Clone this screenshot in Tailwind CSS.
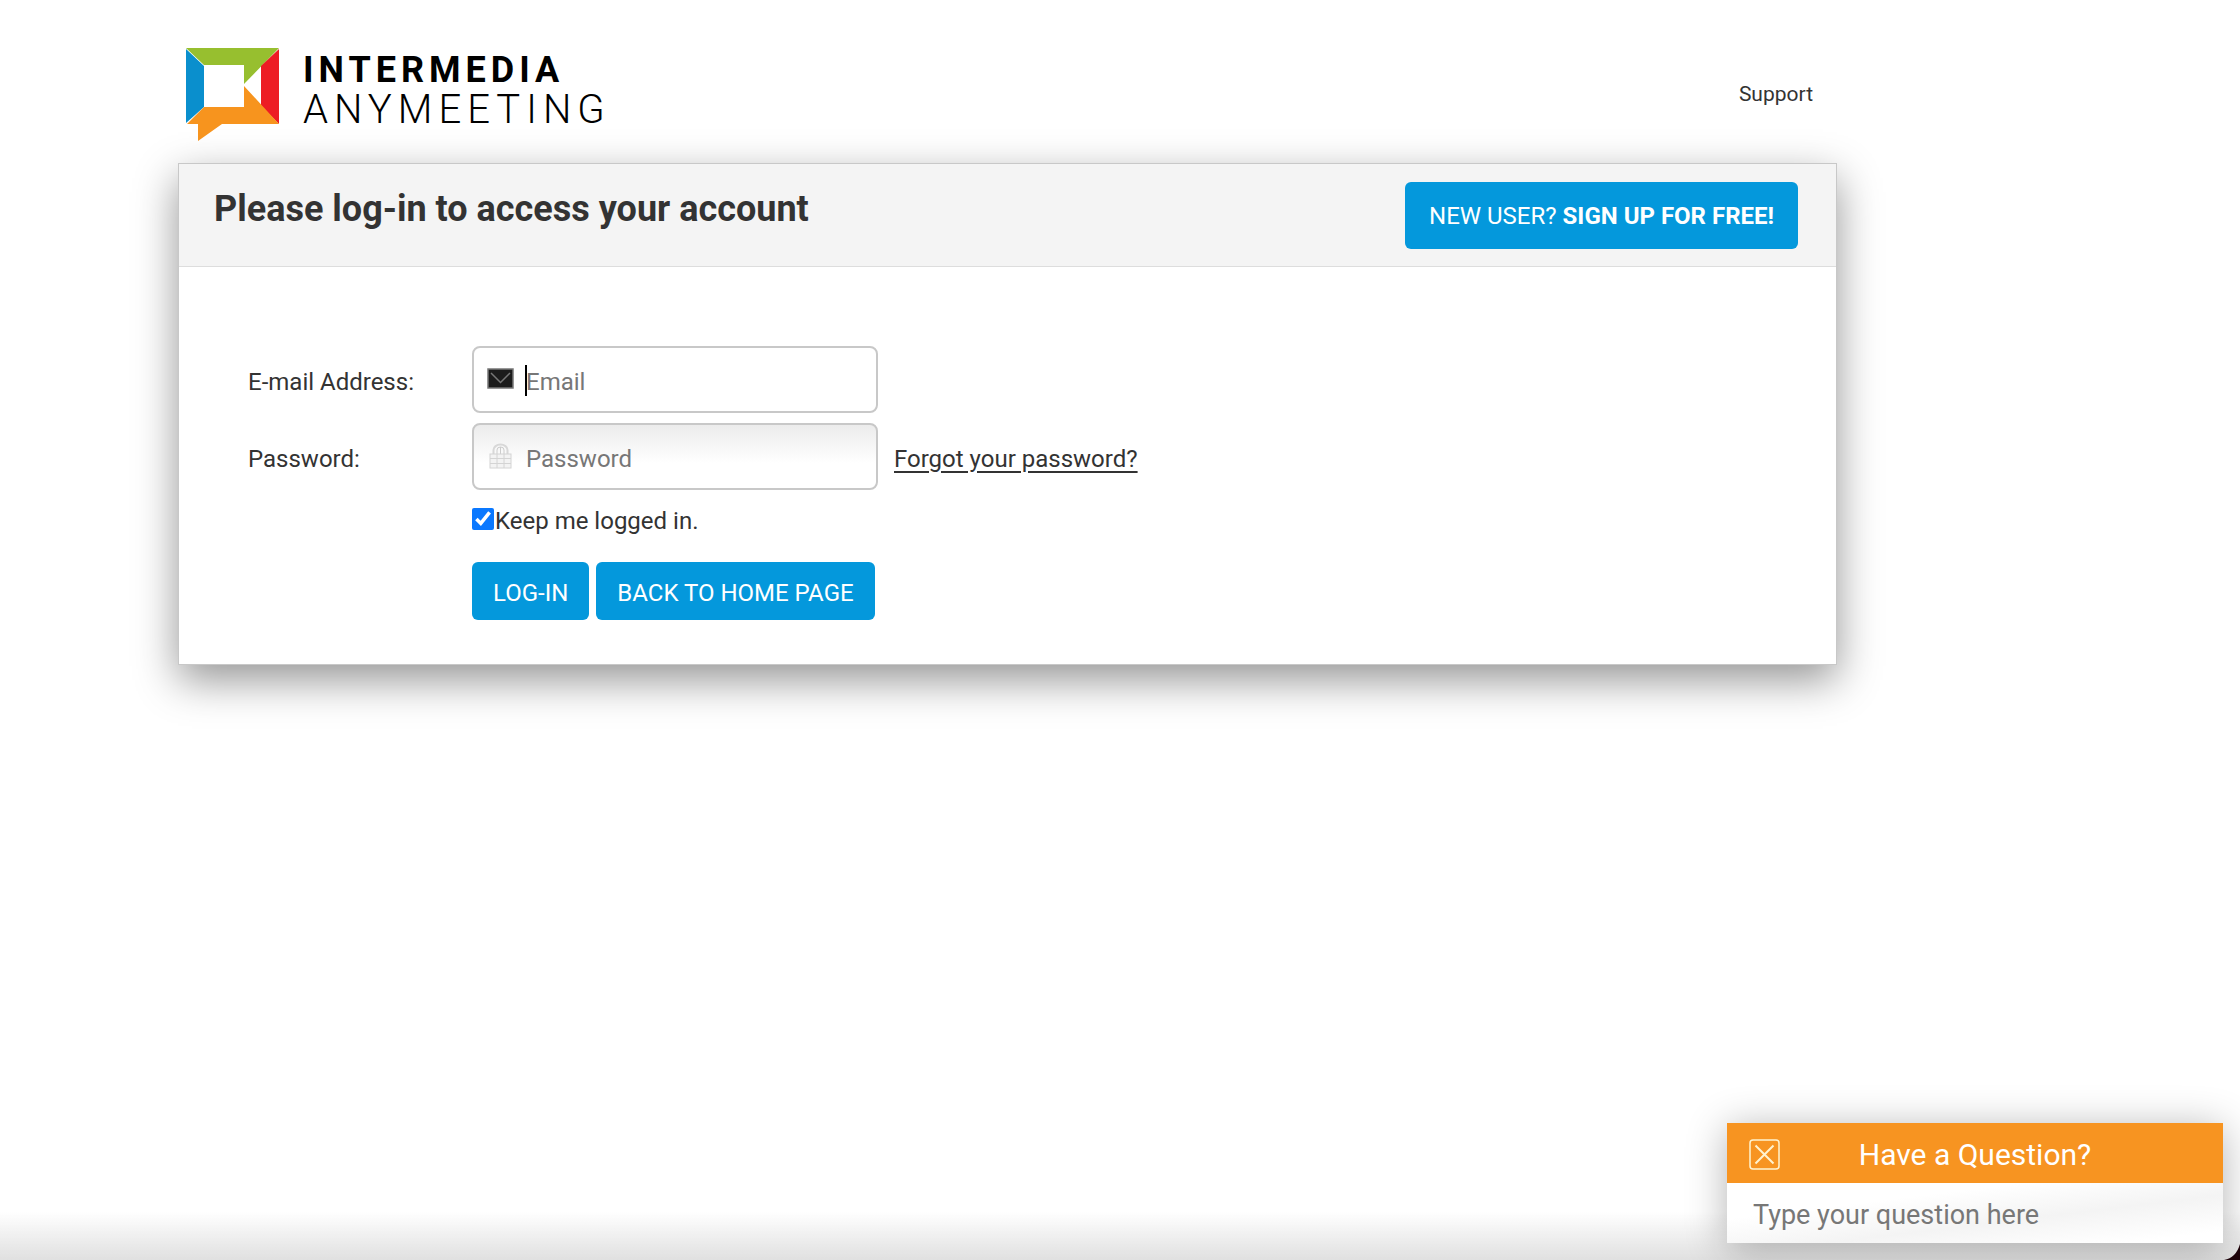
<!DOCTYPE html>
<html lang="en">
<head>
    <meta charset="UTF-8">
    <meta name="viewport" content="width=device-width, initial-scale=1.0">
    <title>Intermedia AnyMeeting - Log-in</title>
    <script src="https://cdn.jsdelivr.net/npm/@tailwindcss/browser@4"></script>
</head>
<body class="bg-white text-[#333] font-[Roboto,sans-serif] text-2xl">
    <div class="min-h-screen pl-[178px] pr-8">
        <div class="w-full max-w-[1659px]">
            <header class="flex items-start justify-between pl-2 pr-6 pt-12 h-[163px]">
                <a href="#" class="flex text-black" aria-label="Intermedia AnyMeeting">
                    <svg class="w-[93px] h-[93px]" viewBox="0 0 93 93">
                        <path fill="#97bf2f" d="M0 0H93L58 36V17H18Z"/>
                        <path fill="#0a8fcd" d="M0 1L18 18V59L0 75Z"/>
                        <path fill="#ed1c24" d="M93 1V76L75 58V18Z"/>
                        <path fill="#f7941e" d="M1 76L18 59H58V38L93 76H36L12 93V76Z"/>
                    </svg>
                    <span class="ml-6 flex flex-col">
                        <span class="text-[36px] leading-[44px] font-bold tracking-[5px]">INTERMEDIA</span>
                        <span class="text-[40px] leading-[36px] font-light tracking-[6px]">ANYMEETING</span>
                    </span>
                </a>
                <a href="#" class="mt-8 text-[21px] leading-7">Support</a>
            </header>
            <main class="border border-[#c8c8c8] bg-white shadow-[0_15px_40px_rgba(0,0,0,0.42)]">
                <div class="flex items-start justify-between bg-[#f4f4f4] border-b border-[#ddd] pl-[35px] pr-[38px] pt-[18px] h-[103px]">
                    <h1 class="pt-1 text-[36px] leading-[46px] font-bold">Please log-in to access your account</h1>
                    <a href="#" class="h-[67px] px-6 rounded-md bg-[#0498dc] text-white flex items-center whitespace-pre">NEW USER? <b>SIGN UP FOR FREE!</b></a>
                </div>
                <form class="grid grid-cols-[224px_1fr] gap-y-[10px] pl-[69px] pt-[79px] pb-[44px]">
                    <label for="email" class="self-center pt-1">E-mail Address:</label>
                    <div class="relative w-[406px]">
                        <input id="email" type="email" placeholder="Email" class="block w-full h-[67px] pl-[52px] pt-1 pr-3 border-2 border-[#c8c8c8] rounded-lg outline-none placeholder:text-[#777]">
                        <svg class="absolute left-[15px] top-[22px] w-[27px] h-[21px]" viewBox="0 0 27 21">
                            <rect x="1" y="1" width="25" height="19" fill="#1c1c1c" stroke="#777" stroke-width="1.5"/>
                            <path d="M4 5L13.500 14.500L23 5" fill="none" stroke="#777" stroke-width="1.500"/>
                        </svg>
                        <span class="absolute left-[53px] top-[19px] w-[2px] h-[31px] bg-black"></span>
                    </div>
                    <label for="password" class="self-center pt-1">Password:</label>
                    <div class="flex items-center gap-4">
                        <div class="relative w-[406px]">
                            <input id="password" type="password" placeholder="Password" class="block w-full h-[67px] pl-[52px] pt-1 pr-3 border-2 border-[#c8c8c8] rounded-lg outline-none bg-linear-to-b from-[#ececec] to-white to-60% placeholder:text-[#777]">
                            <svg class="absolute left-[17px] top-5 w-[23px] h-[26px]" viewBox="0 0 23 26" fill="none" stroke="#ccc">
                                <path stroke-width="2" stroke="#d8d8d8" d="M4.500 11V7a7 5.500 0 0 1 14 0V11"/>
                                <path d="M8 11V7a3.500 3 0 0 1 7 0V11M11.500 4V11"/>
                                <rect x="1" y="11" width="21" height="14" fill="#f3f3f3" stroke="#d4d4d4"/>
                                <path stroke="#d4d4d4" d="M1 15.500H22M1 20.500H22M8 11V25M15 11V25"/>
                            </svg>
                        </div>
                        <a href="#" class="pt-1 underline underline-offset-4">Forgot your password?</a>
                    </div>
                    <div class="col-start-2 flex items-center h-[42px]">
                        <input id="keep" type="checkbox" checked class="size-[22px] mb-[5px] accent-[#0a78ff]">
                        <label for="keep" class="ml-px">Keep me logged in.</label>
                    </div>
                    <div class="col-start-2 flex gap-[7px] pt-[10px]">
                        <button type="submit" class="h-[58px] pt-1 px-[21px] rounded-md bg-[#0498dc] text-white">LOG-IN</button>
                        <button type="button" class="h-[58px] pt-1 px-[21px] rounded-md bg-[#0498dc] text-white">BACK TO HOME PAGE</button>
                    </div>
                </form>
            </main>
        </div>
    </div>

    <!-- bottom edge of the window -->
    <div class="fixed inset-x-0 bottom-0 h-12 bg-linear-to-t from-[#e0e0e0] to-transparent"></div>

    <!-- chat box -->
    <section class="fixed right-[17px] bottom-[17px] w-[496px] shadow-[0_5px_40px_rgba(0,0,0,0.3)]">
        <div class="relative flex items-center justify-center h-[60px] pt-1 bg-[#f79421] text-white">
            <button type="button" aria-label="Close" class="absolute left-[22px] top-4 size-[31px]">
                <svg class="size-[31px]" viewBox="0 0 31 31" fill="none" stroke="#fff3d0" stroke-width="2">
                    <rect x="1" y="1" width="29" height="29" rx="3" stroke-width="1.500"/>
                    <path d="M6.500 6.500L24.500 24.500M24.500 6.500L6.500 24.500"/>
                </svg>
            </button>
            <h2 class="text-[30px] leading-9">Have a Question?</h2>
        </div>
        <input type="text" aria-label="Type your question here" placeholder="Type your question here" class="block w-full h-[60px] pl-[26px] pt-1 text-[27px] bg-linear-to-br from-white from-30% via-[#f4f4f4] via-60% to-white to-90% outline-none placeholder:text-[#777]">
    </section>
    <svg class="fixed right-0 bottom-0 size-4" viewBox="0 0 16 16"><path fill="#1c0309" d="M16 0V16H0Q12 14 16 0Z"/></svg>
</body>
</html>
